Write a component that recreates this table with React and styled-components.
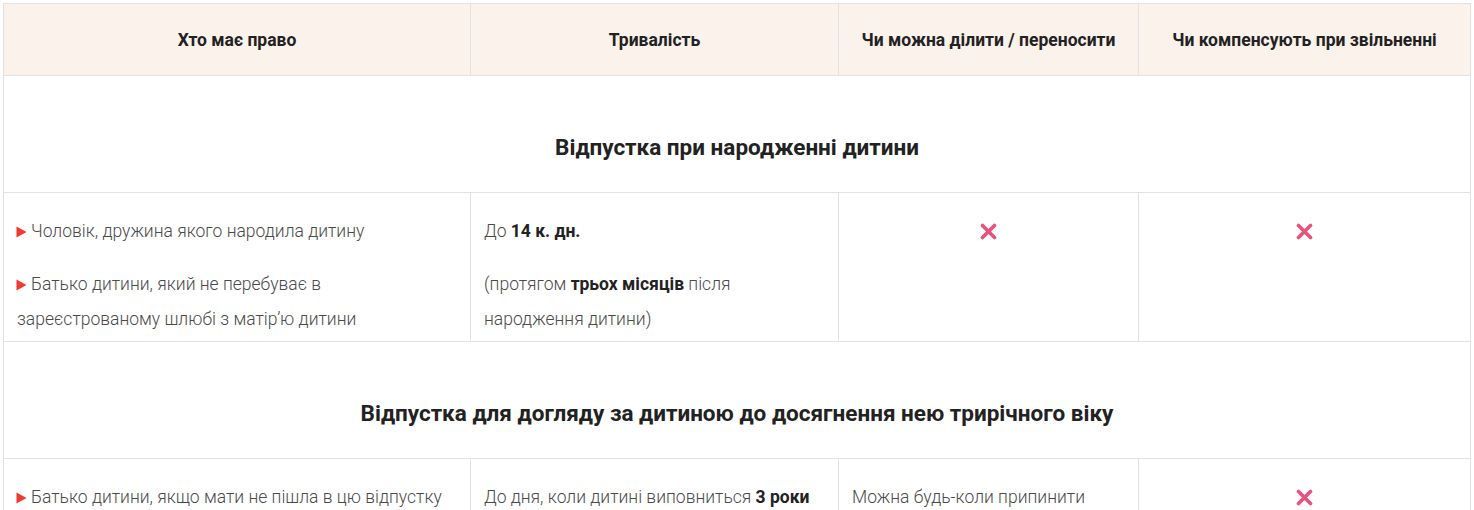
import styled, { createGlobalStyle } from "styled-components";

const GlobalStyle = createGlobalStyle`
  body {
    margin: 0;
    background: #fff;
    font-family: Roboto, "Liberation Sans", sans-serif;
  }
`;

const Page = styled.div`
  padding: 3px;
`;

const Table = styled.table`
  width: 1467px;
  border-collapse: collapse;
  table-layout: fixed;
  font-family: Roboto, "Liberation Sans", sans-serif;
`;

const HeadCell = styled.th`
  height: 71px;
  padding: 0 12px;
  background: #fcf2ec;
  border: 1px solid #e2e2e2;
  color: #222;
  font-size: 17.5px;
  font-weight: 700;
  text-align: center;
  vertical-align: middle;
`;

const SectionCell = styled.td`
  padding: 58px 12px 32px;
  border: 1px solid #e2e2e2;
  color: #222;
  font-size: 22.5px;
  line-height: 26px;
  font-weight: 700;
  text-align: center;
  vertical-align: top;
`;

const Cell = styled.td`
  padding: 21px 13px 4px;
  border: 1px solid #e2e2e2;
  vertical-align: top;
  text-align: ${(p) => (p.$center ? "center" : "left")};
  color: #4a4a4a;
  font-size: 17.5px;
  line-height: 35px;
  font-weight: 300;

  b {
    font-weight: 700;
    color: #222;
  }
`;

const Para = styled.p`
  margin: 0 0 18px;
  &:last-child {
    margin-bottom: 0;
  }
`;

const Marker = styled.svg`
  width: 11px;
  height: 12px;
  margin-left: -1px;
  margin-right: 4px;
  vertical-align: -1px;
`;

const CrossIcon = styled.svg`
  width: 17px;
  height: 17px;
  vertical-align: -3px;
`;

const Cross = () => (
  <CrossIcon viewBox="0 0 17 17">
    <path d="M2.5 2.5L14.5 14.5M14.5 2.5L2.5 14.5" stroke="#e9527a" strokeWidth="3.6" strokeLinecap="round" />
  </CrossIcon>
);

const Item = ({ children }) => (
  <Para>
    <Marker viewBox="0 0 11 12">
      <path d="M0.5 0.5L10.5 6L0.5 11.5Z" fill="#f03a32" />
    </Marker>
    {children}
  </Para>
);

export default function App() {
  return (
    <Page>
      <GlobalStyle />
      <Table>
        <colgroup>
          <col style={{ width: 467 }} />
          <col style={{ width: 368 }} />
          <col style={{ width: 300 }} />
          <col style={{ width: 332 }} />
        </colgroup>
        <thead>
          <tr>
            <HeadCell>Хто має право</HeadCell>
            <HeadCell>Тривалість</HeadCell>
            <HeadCell>Чи можна ділити / переносити</HeadCell>
            <HeadCell>Чи компенсують при звільненні</HeadCell>
          </tr>
        </thead>
        <tbody>
          <tr>
            <SectionCell colSpan={4}>Відпустка при народженні дитини</SectionCell>
          </tr>
          <tr>
            <Cell>
              <Item>Чоловік, дружина якого народила дитину</Item>
              <Item>Батько дитини, який не перебуває в зареєстрованому шлюбі з матір’ю дитини</Item>
            </Cell>
            <Cell>
              <Para>
                До <b>14 к. дн.</b>
              </Para>
              <Para>
                (протягом <b>трьох місяців</b> після народження дитини)
              </Para>
            </Cell>
            <Cell $center>
              <Cross />
            </Cell>
            <Cell $center>
              <Cross />
            </Cell>
          </tr>
          <tr>
            <SectionCell colSpan={4}>
              Відпустка для догляду за дитиною до досягнення нею трирічного віку
            </SectionCell>
          </tr>
          <tr>
            <Cell>
              <Item>Батько дитини, якщо мати не пішла в цю відпустку</Item>
            </Cell>
            <Cell>
              <Para>
                До дня, коли дитині виповниться <b>3 роки</b>
              </Para>
            </Cell>
            <Cell>
              <Para>Можна будь-коли припинити</Para>
            </Cell>
            <Cell $center>
              <Cross />
            </Cell>
          </tr>
        </tbody>
      </Table>
    </Page>
  );
}
